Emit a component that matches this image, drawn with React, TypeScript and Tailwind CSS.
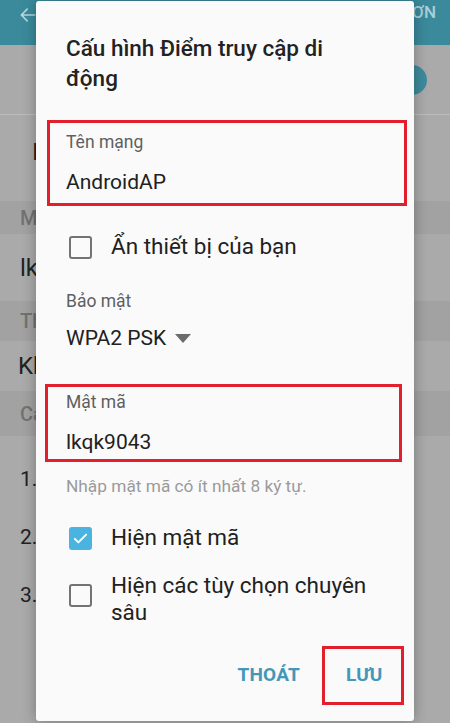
import React from "react";

function Box({ checked }: { checked?: boolean }) {
  if (checked) {
    return (
      <div className="w-[23px] h-[23px] rounded-[3px] bg-[#4ab3e0] flex items-center justify-center shrink-0">
        <svg width="17" height="17" viewBox="0 0 24 24" fill="none">
          <path d="M4 12.5l5 5L20 6.5" stroke="#ffffff" strokeWidth="2.8" strokeLinecap="round" strokeLinejoin="round" />
        </svg>
      </div>
    );
  }
  return <div className="w-[23px] h-[23px] rounded-[3px] border-2 border-[#737373] shrink-0" />;
}

export default function App() {
  return (
    <div
      className="relative w-[450px] h-[723px] overflow-hidden bg-[#aaaaaa]"
      style={{ fontFamily: "Roboto, 'Noto Sans', 'Liberation Sans', sans-serif" }}
    >
      {/* background screen */}
      <div className="flex flex-col">
        <div className="h-[45px] bg-[#3a8a9c] flex items-start justify-between pl-[18px] pr-[14px]">
          <svg className="mt-[5px]" width="20" height="20" viewBox="0 0 24 24" fill="none">
            <path d="M20 12H5M11 5l-7 7 7 7" stroke="#b9d8de" strokeWidth="2" strokeLinecap="round" strokeLinejoin="round" />
          </svg>
          <span className="mt-[1px] text-[17px] leading-[22px] text-[#a9d0d8] font-medium">HƠN</span>
        </div>
        <div className="h-[70px] flex items-center justify-end pr-[23px] border-b border-[#bdbdbd]">
          <div className="w-[30px] h-[30px] rounded-full bg-[#3d8b9b]" />
        </div>
        <div className="h-[86px] flex items-center pl-[32px] pb-[12px]">
          <span className="text-[24px] text-[#222]">I</span>
        </div>
        <div className="h-[33px] bg-[#a2a2a2] flex items-center pl-[20px]">
          <span className="text-[20px] text-[#727272] font-medium">Mậ</span>
        </div>
        <div className="h-[67px] flex items-center pl-[20px]">
          <span className="text-[24px] text-[#222]">lkq</span>
        </div>
        <div className="h-[40px] bg-[#a2a2a2] flex items-center pl-[20px]">
          <span className="text-[20px] text-[#727272] font-medium">Th</span>
        </div>
        <div className="h-[50px] flex items-center pl-[18px]">
          <span className="text-[24px] text-[#222]">Kh</span>
        </div>
        <div className="h-[45px] bg-[#a2a2a2] flex items-center pl-[20px]">
          <span className="text-[20px] text-[#727272] font-medium">Cá</span>
        </div>
        <div className="flex flex-col pl-[20px] pt-[16px] text-[21px] text-[#222]">
          <div className="h-[56px] flex items-center">1.</div>
          <div className="h-[60px] flex items-center">2.</div>
          <div className="h-[56px] flex items-center">3.</div>
        </div>
      </div>

      {/* dialog */}
      <div className="absolute left-[36px] top-[1px] w-[378px] h-[720px] bg-[#fafafa] rounded-[3px] shadow-[0_0_14px_rgba(0,0,0,0.3)] flex flex-col">
        <div className="pt-[32px] pl-[30px] text-[22.5px] leading-[30px] font-medium text-[#222]">
          Cấu hình Điểm truy cập di
          <br />
          động
        </div>

        <div className="mt-[27px] ml-[11px] w-[360px] h-[86px] border-[3px] border-[#e31e2d] pl-[16px] pt-[8px] flex flex-col">
          <div className="text-[17.5px] leading-[22px] text-[#5f5f5f]">Tên mạng</div>
          <div className="mt-[16px] text-[21px] leading-[26px] text-[#212121]">AndroidAP</div>
        </div>

        <div className="mt-[17px] h-[48px] flex items-center pl-[33px]">
          <Box />
          <span className="ml-[19px] text-[22.5px] text-[#212121]">Ẩn thiết bị của bạn</span>
        </div>

        <div className="mt-[19px] pl-[30px] text-[17.5px] leading-[22px] text-[#5f5f5f]">Bảo mật</div>
        <div className="mt-[13px] pl-[30px] h-[26px] flex items-center">
          <span className="text-[21px] leading-[26px] text-[#212121]">WPA2 PSK</span>
          <svg className="ml-[9px]" width="16" height="9" viewBox="0 0 16 9">
            <path d="M0 0h16L8 9z" fill="#6b6b6b" />
          </svg>
        </div>

        <div className="mt-[33px] ml-[9px] w-[357px] h-[78px] border-[3px] border-[#e31e2d] pl-[18px] pt-[4px] flex flex-col">
          <div className="text-[17.5px] leading-[22px] text-[#5f5f5f]">Mật mã</div>
          <div className="mt-[16px] text-[21px] leading-[26px] text-[#212121]">lkqk9043</div>
        </div>

        <div className="mt-[13px] pl-[30px] text-[17.3px] leading-[22px] text-[#9a9a9a]">
          Nhập mật mã có ít nhất 8 ký tự.
        </div>

        <div className="mt-[17px] h-[48px] flex items-center pl-[33px]">
          <Box checked />
          <span className="ml-[19px] text-[22.5px] text-[#212121]">Hiện mật mã</span>
        </div>

        <div className="pt-[10px] flex items-center pl-[33px]">
          <div className="-mt-[8px]">
            <Box />
          </div>
          <span className="ml-[19px] text-[22.5px] leading-[27px] text-[#212121] w-[275px]">
            Hiện các tùy chọn chuyên sâu
          </span>
        </div>

        <div className="mt-[20px] flex items-center justify-end pr-[10px]">
          <span className="text-[19px] font-bold text-[#4596b8] tracking-[0.2px]">THOÁT</span>
          <div className="ml-[22px] w-[82px] h-[59px] border-[3px] border-[#e31e2d] flex items-center pl-[21px]">
            <span className="text-[19px] font-bold text-[#4596b8]">LƯU</span>
          </div>
        </div>
      </div>
    </div>
  );
}
